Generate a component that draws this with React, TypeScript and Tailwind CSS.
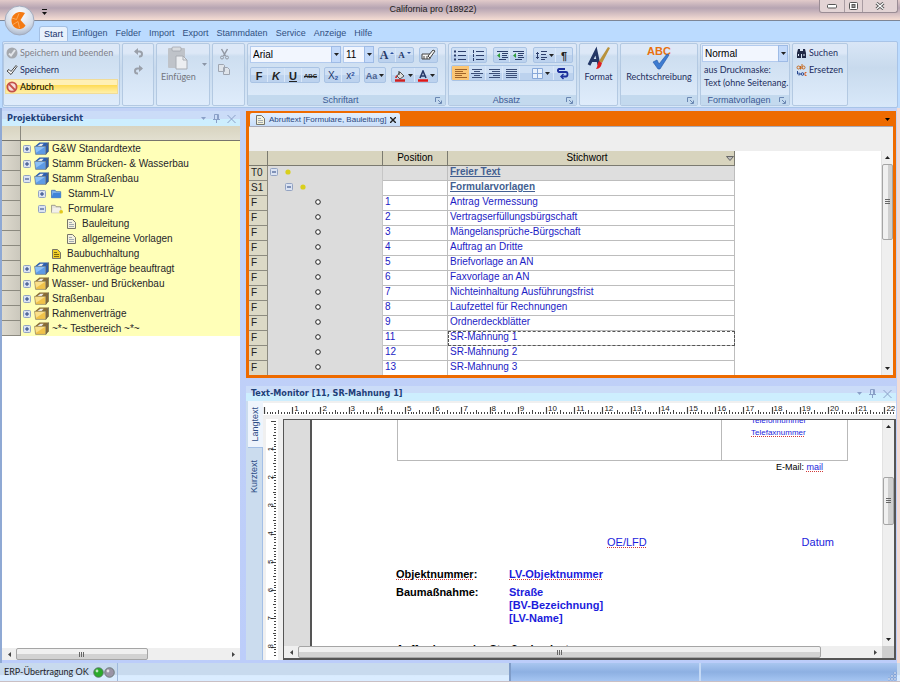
import React from "react";

const ui = "font-['Lato','Open_Sans',sans-serif]";
const sans = "font-['Liberation_Sans',sans-serif]";

/* ---------- small shared pieces ---------- */

function Down({ className = "" }: { className?: string }) {
  return (
    <svg width="5" height="3" viewBox="0 0 5 3" className={className} aria-hidden>
      <path d="M0 0h5L2.500 3z" fill="currentColor" />
    </svg>
  );
}

function Combo({ label, value, width }: { label: string; value: string; width: string }) {
  return (
    <label className={`relative block h-[17px] ${width}`}>
      <select
        aria-label={label}
        defaultValue={value}
        className="h-full w-full appearance-none border border-[#b3cbee] bg-[#f2f6fe] pl-[2px] font-['Liberation_Sans',sans-serif] text-[10px] leading-[14px] text-black outline-none"
      >
        <option>{value}</option>
      </select>
      <span className="pointer-events-none absolute inset-y-0 right-0 flex w-[10px] items-center justify-center border border-[#9ebbe6] bg-[#c4dafa]">
        <Down className="text-[#222]" />
      </span>
    </label>
  );
}

function Group({
  title,
  className = "",
  launcher = false,
  children,
}: {
  title?: string;
  className?: string;
  launcher?: boolean;
  children?: React.ReactNode;
}) {
  return (
    <section
      className={`flex shrink-0 flex-col overflow-hidden rounded-[2px] border border-[#b3c9e2] bg-linear-to-b from-[#dde8f7] from-15% via-[#cddef0] via-20% to-[#dfecfb] ${className}`}
    >
      <div className="min-h-0 flex-1">{children}</div>
      {launcher && (
        <div className={`relative h-[10px] bg-[#c3d9ee] pr-[12px] text-center text-[9px] leading-[10px] text-[#3b5a94] ${sans}`}>
          {title}
          <button aria-label="Optionen" className="absolute top-[2px] right-[3px]">
            <svg width="7" height="7" viewBox="0 0 7 7" fill="none" stroke="#6a87b2" className="block">
              <path d="M.5 5V.5H5M3 3l3 3M6.500 3.500v3h-3" />
            </svg>
          </button>
        </div>
      )}
    </section>
  );
}

function Tool({ label, className = "w-[17px]", children }: { label: string; className?: string; children: React.ReactNode }) {
  return (
    <button
      aria-label={label}
      className={`flex h-[15px] items-center justify-center gap-[2px] border-r border-[#d9e7f8] text-[#222] last:border-r-0 ${className}`}
    >
      {children}
    </button>
  );
}

function Bar({ children }: { children: React.ReactNode }) {
  return (
    <div className="flex h-[16px] overflow-hidden rounded-[2px] border border-[#a9c3e4] bg-linear-to-b from-[#cfe0f5] from-50% to-[#bcd2ee] to-50%">
      {children}
    </div>
  );
}

function Lines({ rows, color = "#3c4f78" }: { rows: [number, number][]; color?: string }) {
  return (
    <svg width="12" height="11" viewBox="0 0 12 11" stroke={color} aria-hidden>
      {rows.map(([a, b], i) => (
        <path key={i} d={`M${a} ${i * 2 + 1.5}H${b}`} />
      ))}
    </svg>
  );
}

/* ---------- title bar ---------- */

function TitleBar() {
  return (
    <header className="relative flex h-[20px] shrink-0 justify-center bg-linear-to-b from-[#e2cbca] via-[#b6a4b2] via-40% to-[#f6ddd3] pr-[34px]">
      <h1 className="text-[9px] leading-[19px] text-[#1c1c1c]">California pro (18922)</h1>
      <svg width="5" height="6" viewBox="0 0 5 6" className="absolute top-[9px] left-[42px]">
        <path d="M0 .5h5" stroke="#111" />
        <path d="M0 3h5L2.500 6z" fill="#111" />
      </svg>
      <div className="absolute top-0 right-[2px] flex h-[13px] rounded-b-[3px] border border-t-0 border-[#9b8d95] bg-[#e3d4d5]">
        <button aria-label="Minimieren" className="flex w-[25px] items-center justify-center border-r border-[#a99ca2]">
          <svg width="11" height="5" viewBox="0 0 11 5"><rect x=".5" y=".5" width="9" height="3.500" rx="1" fill="#fff" stroke="#555" /></svg>
        </button>
        <button aria-label="Wiederherstellen" className="flex w-[18px] items-center justify-center border-r border-[#a99ca2]">
          <svg width="10" height="8" viewBox="0 0 10 8" fill="#fff" stroke="#555"><rect x=".5" y=".5" width="8" height="7" rx="1" /><rect x="3" y="2.500" width="3" height="3" fill="#999" /></svg>
        </button>
        <button aria-label="Schließen" className="flex w-[34px] items-center justify-center">
          <svg width="10" height="8" viewBox="0 0 10 8"><path d="M1.500 1l7 6M8.500 1l-7 6" stroke="#555" strokeWidth="3" /><path d="M1.500 1l7 6M8.500 1l-7 6" stroke="#fff" strokeWidth="1.200" /></svg>
        </button>
      </div>
      <button aria-label="California Menü" className="absolute top-[5px] left-[4px] z-10">
        <svg width="31" height="31" viewBox="0 0 31 31" className="block">
          <defs>
            <radialGradient id="orb" cx=".5" cy=".3" r=".7">
              <stop offset="0" stopColor="#fff" />
              <stop offset=".7" stopColor="#d5dde9" />
              <stop offset="1" stopColor="#a9b6ca" />
            </radialGradient>
          </defs>
          <circle cx="15.500" cy="15.500" r="14.500" fill="url(#orb)" stroke="#a3abbd" />
          <path d="M21 8C15.500 5.500 8.500 8 7.500 14.500 7 21.500 13 25.500 18 23.500c2-.7 3-2 3.500-3l-5-5.500z" fill="#f47a12" />
          <path d="M8 13l4.500 1.500L15 8.500M9 19.500l5-3 1.500 6.500" stroke="#fcb56c" strokeWidth=".8" fill="none" />
        </svg>
      </button>
    </header>
  );
}

/* ---------- ribbon ---------- */

const ribbonTabs = ["Start", "Einfügen", "Felder", "Import", "Export", "Stammdaten", "Service", "Anzeige", "Hilfe"];

function Ribbon() {
  return (
    <div className="shrink-0 border-t border-[#7d8696] bg-[#bbdbff] px-[2px]">
      <nav className="flex h-[20px] items-end pl-[37px] text-[9px] text-[#31507f]">
        {ribbonTabs.map((t, i) => (
          <button
            key={t}
            className={
              i === 0
                ? "h-[15px] rounded-t-[3px] border border-b-0 border-[#a4c0e4] bg-[#e8f1fc] px-[4px] leading-[15px] text-[#15306b]"
                : "h-[15px] px-[4px] leading-[15px]"
            }
          >
            {t}
          </button>
        ))}
      </nav>
      <div className={`flex h-[67px] gap-[2px] rounded-[2px] border border-[#a8c4e8] bg-linear-to-b from-[#d9e6f6] via-[#c8daed] via-40% to-[#d8e8f9] py-px text-[9px] text-[#1e2e60] ${ui}`}>
        <Group className="w-[117px]">
          <div className="flex flex-col gap-[2px] p-px text-[9px] leading-[13px]">
            <button className="flex h-[15px] items-center gap-[2px] px-px text-[#7d8088]">
              <svg width="12" height="12" viewBox="0 0 12 12"><circle cx="6" cy="6" r="5.500" fill="#a4a8ae" /><path d="M3 6.500l2 2L9 3" stroke="#e2e5e9" strokeWidth="2" fill="none" /></svg>
              Speichern und beenden
            </button>
            <button className="flex h-[15px] items-center gap-[2px] px-px">
              <svg width="12" height="12" viewBox="0 0 12 12"><path d="M1 7l2-1.500L5 7.500 10 1.500l1 1L5 10.500z" fill="#fff" stroke="#333" strokeWidth=".9" /></svg>
              Speichern
            </button>
            <button className="flex h-[15px] items-center gap-[2px] border border-[#f1dc98] bg-linear-to-b from-[#fff0b5] from-35% via-[#ffdb52] via-40% to-[#fff0a8] text-black">
              <svg width="12" height="12" viewBox="0 0 12 12" fill="none" stroke="#c4504a" strokeWidth="1.800"><circle cx="6" cy="6" r="4.600" fill="#f7dcd8" /><path d="M3 3l6 6" /></svg>
              Abbruch
            </button>
          </div>
        </Group>
        <Group className="w-[32px]">
          <div className="flex flex-col items-center gap-[7px] pt-[4px]">
            <button aria-label="Rückgängig">
              <svg width="9" height="10" viewBox="0 0 9 10" className="block"><path d="M1.500 3.500h4a2.300 2.300 0 010 5H5" stroke="#9aa0aa" strokeWidth="2" fill="none" /><path d="M0 3.500L4 0v7z" fill="#9aa0aa" /></svg>
            </button>
            <button aria-label="Wiederholen">
              <svg width="9" height="10" viewBox="0 0 9 10" className="block"><path d="M7.500 3.500h-4a2.300 2.300 0 000 5H4" stroke="#9aa0aa" strokeWidth="2" fill="none" /><path d="M9 3.500L5 0v7z" fill="#9aa0aa" /></svg>
            </button>
          </div>
        </Group>
        <Group className="w-[54px]">
          <div className="flex justify-between pr-[2px] pl-[4px]">
            <button className="flex flex-col items-center text-[9px] leading-[11px] text-[#73757d]">
              <svg width="22" height="25" viewBox="0 0 22 25" className="mt-[2px]">
                <rect x="1" y="2" width="17" height="20" rx="1" fill="#bfc3c9" />
                <rect x="5" y="1" width="9" height="4" rx="1" fill="#d9dce0" stroke="#9b9fa6" strokeWidth=".7" />
                <path d="M9 10h7l4 4v9H9z" fill="#eceef1" stroke="#a8acb3" /><path d="M16 10v4h4" fill="none" stroke="#a8acb3" />
              </svg>
              Einfügen
            </button>
            <Down className="mt-[19px] text-[#8b95a6]" />
          </div>
        </Group>
        <Group className="w-[33px]">
          <div className="flex flex-col items-center gap-[4px] pt-[4px] pr-[9px]">
            <button aria-label="Ausschneiden">
              <svg width="9" height="12" viewBox="0 0 9 12" stroke="#9298a3" fill="none" className="block"><path d="M1.500 1l4 7M7.500 1l-4 7" strokeWidth="1.500" /><circle cx="2" cy="9.500" r="1.500" /><circle cx="7" cy="9.500" r="1.500" /></svg>
            </button>
            <button aria-label="Kopieren">
              <svg width="12" height="11" viewBox="0 0 12 11" stroke="#9ea5b0" fill="#dfe4ea" className="block"><path d="M.5.5h5l1 1v6h-6zM5.500 3.500h4l2 2v5h-6z" /></svg>
            </button>
          </div>
        </Group>

        <Group title="Schriftart" launcher className={`w-[199px] ${sans}`}>
          <div className="flex flex-col gap-[4px] px-[2px] pt-[2px]">
            <div className="flex items-center">
              <Combo label="Schriftart" value="Arial" width="w-[91px]" />
              <span className="w-[2px]" />
              <Combo label="Schriftgröße" value="11" width="w-[31px]" />
              <span className="w-[4px]" />
              <Bar>
                <Tool label="Schrift vergrößern"><span className="font-['Liberation_Serif',serif] text-[12px] leading-[12px] font-bold text-[#273a6a]">A</span><svg width="4" height="8" viewBox="0 0 4 8"><path d="M0 3l2-2 2 2z" fill="#2a4fa0" /></svg></Tool>
                <Tool label="Schrift verkleinern"><span className="font-['Liberation_Serif',serif] text-[9px] leading-[12px] font-bold text-[#273a6a]">A</span><svg width="4" height="8" viewBox="0 0 4 8"><path d="M0 1h4L2 3z" fill="#2a4fa0" /></svg></Tool>
              </Bar>
              <span className="w-[5px]" />
              <Bar>
                <Tool label="Formatierung löschen">
                  <svg width="15" height="12" viewBox="0 0 15 12" fill="#f4f4f4" stroke="#444"><path d="M1 5h8v5H1zM3 10V7M6 10V7" /><path d="M7 7l5-6 2 1-5 7z" /></svg>
                </Tool>
              </Bar>
            </div>
            <div className="flex items-center leading-[12px]">
              <Bar>
                <Tool label="Fett"><b className="text-[11px]">F</b></Tool>
                <Tool label="Kursiv"><b className="text-[11px] italic">K</b></Tool>
                <Tool label="Unterstrichen"><b className="text-[11px] underline">U</b></Tool>
                <Tool label="Durchgestrichen"><b className="text-[6px] line-through">ABC</b></Tool>
              </Bar>
              <span className="w-[4px]" />
              <Bar>
                <Tool label="Tiefgestellt"><span className="text-[10px] text-[#24376b]">X<sub className="text-[6px] font-bold text-[#2a4fa0]">2</sub></span></Tool>
                <Tool label="Hochgestellt"><span className="text-[10px] text-[#24376b]">x<sup className="text-[6px] font-bold text-[#2a4fa0]">2</sup></span></Tool>
              </Bar>
              <span className="w-[4px]" />
              <Bar>
                <Tool label="Groß-/Kleinschreibung" className="w-[20px]"><span className="text-[9px] font-bold text-[#4a628f]">Aa</span><Down /></Tool>
              </Bar>
              <span className="w-[5px]" />
              <Bar>
                <Tool label="Hervorheben" className="w-[23px]">
                  <svg width="12" height="12" viewBox="0 0 12 12"><path d="M3 6l3-4 4 4-4 3z" fill="#ddd" stroke="#555" /><path d="M5 1v4" stroke="#333" /><path d="M1 8c0-2 2-3 2-3v3z" fill="#c33" /><path d="M1 10.500h10" stroke="#d02020" strokeWidth="2.500" /></svg>
                  <Down />
                </Tool>
                <Tool label="Schriftfarbe" className="w-[22px]">
                  <svg width="10" height="12" viewBox="0 0 10 12"><path d="M2 8l3-7 3 7M3 6h4" stroke="#273a6a" strokeWidth="1.600" fill="none" /><path d="M0 10.500h10" stroke="#e01818" strokeWidth="2.500" /></svg>
                  <Down />
                </Tool>
              </Bar>
            </div>
          </div>
        </Group>

        <Group title="Absatz" launcher className={`w-[129px] ${sans}`}>
          <div className="flex flex-col gap-[2px] px-[2px] pt-[3px]">
            <div className="flex gap-[6px]">
              <Bar>
                <Tool label="Aufzählung"><svg width="12" height="11" viewBox="0 0 12 11" stroke="#2d3f6c"><path d="M0 1.500h2M0 5.500h2M0 9.500h2" strokeWidth="2" /><path d="M4 1.500h8M4 5.500h8M4 9.500h8" /></svg></Tool>
                <Tool label="Nummerierung"><svg width="12" height="11" viewBox="0 0 12 11" stroke="#2d3f6c"><path d="M1.500 0v3M1.500 4v3M1.500 8v3" /><path d="M4 1.500h8M4 5.500h8M4 9.500h8" /></svg></Tool>
              </Bar>
              <Bar>
                {["Einzug verkleinern", "Einzug vergrößern"].map((l) => (
                  <Tool key={l} label={l} className="w-[16px]">
                    <svg width="12" height="11" viewBox="0 0 12 11" stroke="#2d3f6c"><path d="M1 1.500h11M6 3.500h6M6 5.500h5M6 7.500h6M3 9.500h7" /><path d="M4 3L1 5.500 4 8z" fill="#2f9c3c" stroke="none" /></svg>
                  </Tool>
                ))}
              </Bar>
              <Bar>
                <Tool label="Zeilenabstand" className="w-[22px]">
                  <svg width="11" height="11" viewBox="0 0 11 11" stroke="#2d3f6c"><path d="M5 1.500h6M5 4.500h5M5 7.500h6M5 9.500h4M1.500 2v7M0 3.500h3M0 7.500h3" /></svg>
                  <Down />
                </Tool>
                <Tool label="Formatierungszeichen" className="w-[16px]"><b className="text-[11px] leading-[12px]">¶</b></Tool>
              </Bar>
            </div>
            <Bar>
              <button aria-label="Linksbündig" aria-pressed="true" className="flex w-[17px] items-center justify-center bg-[#fbc674]"><Lines rows={[[0, 12], [0, 8], [0, 11], [0, 7], [0, 12]]} color="#a0642a" /></button>
              <Tool label="Zentriert"><Lines rows={[[1, 11], [3, 9], [0, 12], [3, 9], [1, 11]]} /></Tool>
              <Tool label="Rechtsbündig"><Lines rows={[[1, 12], [4, 12], [1, 12], [5, 12], [1, 12]]} /></Tool>
              <Tool label="Blocksatz"><Lines rows={[[1, 12], [1, 12], [1, 12], [1, 12], [1, 12]]} /></Tool>
              <Tool label="Rahmen" className="w-[34px] pl-[8px]">
                <svg width="11" height="11" viewBox="0 0 11 11" fill="#e9f2fc" stroke="#88a8d8"><path d="M.5.5h10v10H.5zM5.500.5v10M.5 5.500h10" /></svg>
                <Down />
              </Tool>
              <Tool label="Textfluss"><svg width="13" height="13" viewBox="0 0 13 13" fill="none" stroke="#1c2f9c" strokeWidth="1.800"><path d="M9 2H3c-1.500 0-1.500 3 0 3h7c2 0 2 4.500 0 4.500H6" /><path d="M7.500 7L5 9.500 7.500 12" strokeWidth="1.400" /></svg></Tool>
            </Bar>
          </div>
        </Group>

        <Group className="w-[39px]">
          <button className="flex w-full flex-col items-center text-[9px] leading-[11px]">
            <svg width="24" height="25" viewBox="0 0 24 25" className="mt-[2px]">
              <path d="M2 19L9 5l3 14M5 14.500h7" stroke="#233766" strokeWidth="3" fill="none" />
              <path d="M21 1l2 1-8 15-3-2z" fill="#b8923c" /><path d="M12 15l3 2-1 3c-1 2-3 3-5 3 2-3 1-5 3-8z" fill="#e01f1f" />
            </svg>
            Format
          </button>
        </Group>
        <Group launcher className="w-[78px]">
          <button className="flex w-full flex-col items-center text-[9px] leading-[11px]">
            <span className="relative mt-[3px] block h-[24px] w-[26px]">
              <b className="block font-['Liberation_Sans',sans-serif] text-[11px] leading-[9px] text-[#e8710f]">ABC</b>
              <svg width="18" height="17" viewBox="0 0 18 17" className="absolute top-[6px] left-[6px]"><path d="M1 9l4-2 2 4L15 1l2 1L8 16H6z" fill="#3d7bd1" stroke="#2558a5" strokeWidth=".6" /></svg>
            </span>
            Rechtschreibung
          </button>
        </Group>
        <Group title="Formatvorlagen" launcher className="w-[90px]">
          <div className="px-px pt-px text-[9px] leading-[13px] whitespace-nowrap">
            <Combo label="Formatvorlage" value="Normal" width="w-[86px]" />
            <p className="mt-px pl-[2px]">aus Druckmaske:</p>
            <p className="pl-[2px]">Text (ohne Seitenang.</p>
          </div>
        </Group>
        <Group className="w-[56px]">
          <div className="flex flex-col gap-[3px] pt-[2px] pl-[3px] text-[9px]">
            <button className="flex h-[14px] items-center gap-[2px]">
              <svg width="11" height="11" viewBox="0 0 11 11" fill="#202945"><path d="M1 5l1-4h2v2h3V1h2l1 4v5H6V6H5v4H1z" /><path d="M2 6h1v2H2zM7.500 6h1v2h-1z" fill="#dce8f8" /></svg>
              Suchen
            </button>
            <button className="flex h-[14px] items-center gap-[2px]">
              <svg width="11" height="13" viewBox="0 0 11 13" fill="none">
                <circle cx="2.500" cy="3.500" r="1.500" stroke="#c66a20" /><path d="M4.500 2v3.500M6 0v5" stroke="#c66a20" /><circle cx="7.500" cy="3.500" r="1.500" stroke="#c66a20" />
                <path d="M1.500 7v3H4M3 8.500L4.500 10 3 11.500" stroke="#27468f" /><circle cx="6.500" cy="10" r="1.300" stroke="#27468f" /><path d="M10.500 8.500H9v3h1.500" stroke="#d9642a" />
              </svg>
              Ersetzen
            </button>
          </div>
        </Group>
      </div>
    </div>
  );
}

/* ---------- dock panel caption ---------- */

function Caption({ children }: { children: React.ReactNode }) {
  return (
    <div className="flex h-[15px] shrink-0 items-center justify-between bg-linear-to-b from-[#cbdcf8] from-50% to-[#cdeefe] to-50% pr-[4px] pl-[5px]">
      <h2 className="font-['DejaVu_Sans_Condensed','DejaVu_Sans',sans-serif] text-[9px] font-bold text-[#1e4078]">{children}</h2>
      <div className="flex items-center gap-[7px] text-[#8aa0c8]">
        <button aria-label="Menü"><Down /></button>
        <button aria-label="Anheften"><svg width="7" height="9" viewBox="0 0 7 9" stroke="currentColor" fill="none" className="block"><path d="M1.500 5V.5h4V5M0 5.500h7M3.500 6v3M4.500 1v4" /></svg></button>
        <button aria-label="Schließen"><svg width="9" height="8" viewBox="0 0 9 8" stroke="currentColor" className="block"><path d="M.5 0l8 8M8.500 0l-8 8" /></svg></button>
      </div>
    </div>
  );
}

/* ---------- project tree ---------- */

type Kind = "blueBox" | "goldBox" | "blueFolder" | "folder" | "doc" | "goldDoc";

function NodeIcon({ kind }: { kind: Kind }) {
  if (kind === "blueBox" || kind === "goldBox") {
    const [a, b, c] = kind === "blueBox" ? ["#5d9be6", "#2b5fb2", "#8cc0f6"] : ["#f0c24a", "#8a6d35", "#fbe08a"];
    return (
      <svg width="15" height="13" viewBox="0 0 14 12" className="shrink-0">
        <path d="M1 4l4-3.500h8.500L11 4z" fill={b} />
        <path d="M3 4l3-2.500h3l-2 2.500z" fill="#eee" />
        <path d="M11 4l2.500-3.500v8L11 11.500z" fill={b} stroke="#4a4a4a" strokeWidth=".5" />
        <path d="M.5 4H11v7.500H1.500z" fill={a} stroke="#6b6b6b" strokeWidth=".5" />
        <path d="M1 4.500h9L2 10z" fill={c} />
      </svg>
    );
  }
  if (kind === "blueFolder" || kind === "folder") {
    const blue = kind === "blueFolder";
    return (
      <svg width="12" height="10" viewBox="0 0 13 10" className="shrink-0">
        <path d="M.5 1h4l1 1.500h5V9H.5z" fill={blue ? "#7db0ea" : "#e6e4da"} stroke={blue ? "#3668ac" : "#85837c"} strokeWidth=".8" />
        <path d="M2.500 4h8v5h-10z" fill={blue ? "#3f84d8" : "#f3f1ea"} />
        {!blue && <circle cx="11" cy="8" r="2" fill="#e2c91d" />}
      </svg>
    );
  }
  return (
    <svg width="9" height="10" viewBox="0 0 9 10" className="shrink-0">
      <path d="M.5.5h5l3 3v6h-8z" fill={kind === "doc" ? "#f4f2dc" : "#f0cf28"} stroke="#77756a" />
      <path d="M2 3.500h3M2 5.500h5M2 7.500h5" stroke={kind === "doc" ? "#9aa3ae" : "#6f5e10"} strokeWidth=".9" />
    </svg>
  );
}

function Toggle({ open }: { open: boolean }) {
  return (
    <button aria-label={open ? "Zuklappen" : "Aufklappen"} className="shrink-0">
      <svg width="8" height="8" viewBox="0 0 8 8" className="block">
        <rect x=".5" y=".5" width="7" height="7" rx="1" fill="#dbe3f2" stroke="#93a3c2" />
        <path d={open ? "M2 4h4" : "M2 4h4M4 2v4"} stroke="#24407e" />
      </svg>
    </button>
  );
}

const tree: { text: string; kind: Kind; pad: string; open?: boolean }[] = [
  { text: "G&W Standardtexte", kind: "blueBox", pad: "gap-[3px] pl-[2px]", open: false },
  { text: "Stamm Brücken- & Wasserbau", kind: "blueBox", pad: "gap-[3px] pl-[2px]", open: false },
  { text: "Stamm Straßenbau", kind: "blueBox", pad: "gap-[3px] pl-[2px]", open: true },
  { text: "Stamm-LV", kind: "blueFolder", pad: "gap-[5px] pl-[17px]", open: false },
  { text: "Formulare", kind: "folder", pad: "gap-[5px] pl-[17px]", open: true },
  { text: "Bauleitung", kind: "doc", pad: "gap-[6px] pl-[46px]" },
  { text: "allgemeine Vorlagen", kind: "doc", pad: "gap-[6px] pl-[46px]" },
  { text: "Baubuchhaltung", kind: "goldDoc", pad: "gap-[6px] pl-[31px]" },
  { text: "Rahmenverträge beauftragt", kind: "blueBox", pad: "gap-[3px] pl-[2px]", open: false },
  { text: "Wasser- und Brückenbau", kind: "goldBox", pad: "gap-[3px] pl-[2px]", open: false },
  { text: "Straßenbau", kind: "goldBox", pad: "gap-[3px] pl-[2px]", open: false },
  { text: "Rahmenverträge", kind: "goldBox", pad: "gap-[3px] pl-[2px]", open: false },
  { text: "~*~ Testbereich ~*~", kind: "goldBox", pad: "gap-[3px] pl-[2px]", open: false },
];

function HScroll({ thumb }: { thumb: string }) {
  return (
    <div className="flex h-[12px] min-w-0 flex-1 items-stretch bg-[#efefef]">
      <button aria-label="Nach links" className="flex w-[14px] items-center justify-center"><svg width="3" height="5" viewBox="0 0 3 5"><path d="M3 0v5L0 2.500z" fill="#444" /></svg></button>
      <div className={`flex items-center justify-center rounded-[2px] border border-[#a5a5a5] bg-linear-to-b from-[#f0f0f0] from-50% to-[#d2d2d2] to-50% ${thumb}`}>
        <svg width="6" height="5" viewBox="0 0 6 5" stroke="#666"><path d="M.5 0v5M2.500 0v5M4.500 0v5" /></svg>
      </div>
      <div className="flex-1" />
      <button aria-label="Nach rechts" className="flex w-[14px] items-center justify-center"><svg width="3" height="5" viewBox="0 0 3 5"><path d="M0 0v5l3-2.500z" fill="#444" /></svg></button>
    </div>
  );
}

function VScroll({ lead, thumb }: { lead: string; thumb: string }) {
  return (
    <div className="flex w-[12px] shrink-0 flex-col border-l border-[#e2e2e2] bg-[#efefef]">
      <button aria-label="Nach oben" className="flex h-[13px] items-center justify-center"><svg width="5" height="3" viewBox="0 0 5 3"><path d="M0 3h5L2.500 0z" fill="#222" /></svg></button>
      <div className={lead} />
      <div className={`flex items-center justify-center rounded-[2px] border border-[#a5a5a5] bg-linear-to-r from-[#f0f0f0] from-50% to-[#cfcfcf] to-50% ${thumb}`}>
        <svg width="5" height="6" viewBox="0 0 5 6" stroke="#666"><path d="M0 .5h5M0 2.500h5M0 4.500h5" /></svg>
      </div>
      <div className="flex-1" />
      <button aria-label="Nach unten" className="flex h-[13px] items-center justify-center"><Down className="text-[#222]" /></button>
    </div>
  );
}

function ProjectPanel() {
  return (
    <aside className="flex w-[238px] shrink-0 flex-col bg-white">
      <Caption>Projektübersicht</Caption>
      <div className="flex h-[15px] shrink-0 border-b border-[#77756d] bg-linear-to-b from-[#d8d4c0] to-[#e2dfd0]">
        <div className="w-[19px] border-r border-[#8b897f]" />
      </div>
      <ul className="bg-[#ffffb8] text-[10px] text-[#26262a]">
        {tree.map((n) => (
          <li key={n.text} className="flex h-[15px]">
            <span className="w-[19px] shrink-0 border-r border-b border-[#8b897f] bg-linear-to-r from-[#dedace] to-[#cbc8bd]" />
            <span className={`flex items-center ${n.pad}`}>
              {n.open !== undefined && <Toggle open={n.open} />}
              <NodeIcon kind={n.kind} />
              <span className="whitespace-nowrap leading-[15px]">{n.text}</span>
            </span>
          </li>
        ))}
      </ul>
      <div className="flex-1" />
      <div className="flex"><HScroll thumb="w-[132px]" /></div>
    </aside>
  );
}

/* ---------- text list ---------- */

const rows = [
  ["T0", "", "Freier Text"],
  ["S1", "", "Formularvorlagen"],
  ["F", "1", "Antrag Vermessung"],
  ["F", "2", "Vertragserfüllungsbürgschaft"],
  ["F", "3", "Mängelansprüche-Bürgschaft"],
  ["F", "4", "Auftrag an Dritte"],
  ["F", "5", "Briefvorlage an AN"],
  ["F", "6", "Faxvorlage an AN"],
  ["F", "7", "Nichteinhaltung Ausführungsfrist"],
  ["F", "8", "Laufzettel für Rechnungen"],
  ["F", "9", "Ordnerdeckblätter"],
  ["F", "11", "SR-Mahnung 1"],
  ["F", "12", "SR-Mahnung 2"],
  ["F", "13", "SR-Mahnung 3"],
];

function ListPanel() {
  return (
    <section className="flex h-[267px] shrink-0 flex-col border-[3px] border-t-[2px] border-[#ee6b00] bg-[#ee6b00]">
      <div className="flex h-[13px] shrink-0 items-stretch justify-between pr-[3px] pl-px">
        <div className="flex items-center gap-[4px] rounded-t-[2px] bg-linear-to-b from-[#e4effc] to-[#c8defa] pr-[4px] pl-[6px]">
          <NodeIcon kind="doc" />
          <span className="text-[8px] leading-[13px] text-[#29467d]">Abruftext [Formulare, Bauleitung]</span>
          <button aria-label="Reiter schließen"><svg width="6" height="6" viewBox="0 0 6 6" stroke="#222" strokeWidth="1.400" className="block"><path d="M0 0l6 6M6 0L0 6" /></svg></button>
        </div>
        <button aria-label="Fensterliste"><Down className="text-black" /></button>
      </div>
      <div className="h-[25px] shrink-0 border-t border-[#a9a9b5] bg-[#eeeeee]" />
      <div className="flex min-h-0 flex-1 overflow-hidden bg-white">
        <div className="min-w-0 flex-1 overflow-hidden">
          <table className="w-[486px] table-fixed border-separate border-spacing-0 text-[10px] leading-[12px]">
            <colgroup><col className="w-[19px]" /><col className="w-[115px]" /><col className="w-[65px]" /><col /></colgroup>
            <thead>
              <tr className="h-[15px] bg-[#d8d4be] text-black">
                {["", "", "Position", "Stichwort"].map((h, i) => (
                  <th key={i} scope="col" className="border-r border-b border-[#7b7a70] p-0 font-normal">
                    {i === 3 ? (
                      <span className="flex items-center"><span className="flex-1">{h}</span><svg width="8" height="5" viewBox="0 0 8 5" stroke="#666" fill="#bbb"><path d="M.5.5h7L4 4.500z" /></svg></span>
                    ) : h}
                  </th>
                ))}
              </tr>
            </thead>
            <tbody>
              {rows.map(([k, pos, text], i) => (
                <tr key={i} className={`h-[15px] text-[#1c1cc4] ${i === 0 ? "bg-[#dedede]" : ""}`}>
                  <th scope="row" className="border-r border-b border-[#8d8b80] bg-[#dcd9c6] p-0 pl-[2px] text-left font-normal text-[#222]">{k}</th>
                  <td className="border-r border-[#c6c6c6] bg-[#dcdcdc] p-0 pb-[3px]">
                    <span className={`flex h-[12px] items-center gap-[7px] ${i === 0 ? "pl-[2px]" : i === 1 ? "pl-[17px]" : "pl-[47px]"}`}>
                      {i < 2 ? (
                        <><Toggle open /><svg width="6" height="6" viewBox="0 0 6 6"><circle cx="3" cy="3" r="2.600" fill="#d9cf1c" /></svg></>
                      ) : (
                        <svg width="6" height="6" viewBox="0 0 6 6"><circle cx="3" cy="3" r="2.300" fill="#fff" stroke="#222" /></svg>
                      )}
                    </span>
                  </td>
                  <td className="border-r border-b border-[#bdbdbd] p-0 pb-[2px] pl-[2px]">{pos}</td>
                  <td
                    className={`border-r border-b border-[#bdbdbd] p-0 pb-[2px] pl-[2px] ${i === 11 ? "outline-1 -outline-offset-1 outline-[#555] outline-dashed" : ""} ${i < 2 ? "font-bold text-[#435f91] underline" : ""}`}
                  >
                    {text}
                  </td>
                </tr>
              ))}
            </tbody>
          </table>
        </div>
        <VScroll lead="h-0" thumb="h-[76px]" />
      </div>
    </section>
  );
}

/* ---------- text monitor ---------- */

const STEP = 28.2;

function HRuler() {
  const ticks = Array.from({ length: 232 }, (_, i) => i);
  return (
    <svg height="12" className="block w-full" aria-hidden>
      {ticks.map((i) => {
        const x = Math.round(1 + (i * STEP) / 10) + 0.5;
        const top = i % 10 === 0 ? 4 : i % 5 === 0 ? 7 : 9;
        return <path key={i} d={`M${x} ${top}V11`} stroke="#444" strokeWidth={i % 10 === 0 ? 1.2 : 1} />;
      })}
      {Array.from({ length: 22 }, (_, i) => (
        <text key={i} x={3 + (i + 1) * STEP} y="8" fontSize="8" fill="#222" fontFamily="Liberation Sans">{i + 1}</text>
      ))}
    </svg>
  );
}

function VRuler() {
  const ticks = Array.from({ length: 84 }, (_, i) => i);
  return (
    <svg width="12" className="block h-full" aria-hidden>
      {ticks.map((i) => {
        const y = Math.round(2 + (i * STEP) / 10) + 0.5;
        const left = i % 10 === 0 ? 5 : i % 5 === 0 ? 7 : 8;
        return <path key={i} d={`M${left} ${y}H10`} stroke="#444" />;
      })}
      {Array.from({ length: 8 }, (_, i) => (
        <text key={i} transform={`translate(7 ${4 + (i + 1) * STEP}) rotate(-90)`} fontSize="8" fill="#222" fontFamily="Liberation Sans">{i + 1}</text>
      ))}
    </svg>
  );
}

const squiggle = "underline decoration-[#d23a3a] decoration-dotted decoration-1 underline-offset-1";

function Page() {
  return (
    <article className="min-w-0 flex-1 overflow-hidden border-l-2 border-[#555] bg-white pl-[84px] text-[11px] leading-[13px] text-[#1c1cdc]">
      <div className="ml-px flex h-[41px] w-[451px] border border-t-0 border-[#b9b9b9] text-[8px] leading-[12px]">
        <div className="flex-1 border-r border-[#b9b9b9]" />
        <div className="w-[125px] pl-[29px]">
          <p className="-mt-[5px]">Telefonnummer</p>
          <p className={squiggle}>Telefaxnummer</p>
        </div>
      </div>
      <p className="w-[427px] text-right text-[9px] text-black">
        E-Mail: <span className={`text-[#1c1cdc] ${squiggle}`}>mail</span>
      </p>
      <p className="mt-[62px] flex w-[438px] justify-between pl-[211px]">
        <span className={squiggle}>OE/LFD</span>
        <span>Datum</span>
      </p>
      <dl className="mt-[19px] grid grid-cols-[113px_1fr] font-bold">
        <dt className="text-black"><span className={squiggle}>Objektnummer</span>:</dt>
        <dd className={squiggle}>LV-Objektnummer</dd>
        <dt className="mt-[5px] text-black">Baumaßnahme:</dt>
        <dd className="mt-[5px]">Straße<br />[BV-Bezeichnung]<br />[LV-Name]</dd>
      </dl>
      <p className="mt-[18px] font-bold text-black">Aufforderung der Straßenbaulast</p>
    </article>
  );
}

function MonitorPanel() {
  return (
    <section className="flex min-h-0 flex-1 flex-col">
      <Caption>Text-Monitor [11, SR-Mahnung 1]</Caption>
      <div className="flex min-h-0 flex-1">
        <div className="flex w-[17px] shrink-0 flex-col bg-[#cbdcee] pl-[2px] text-[9px] text-[#2d4c86]">
          <button className="flex h-[46px] w-full items-center justify-center bg-[#eef4fc]"><span className="rotate-180 [writing-mode:vertical-rl]">Langtext</span></button>
          <button className="flex h-[58px] w-full items-center justify-center border-t border-r border-[#a3bfe6]"><span className="rotate-180 [writing-mode:vertical-rl]">Kurztext</span></button>
          <div className="w-full flex-1 border-r border-[#a3bfe6]" />
        </div>
        <div className="flex min-w-0 flex-1 flex-col bg-[#f0f0f0]">
          <div className="h-[18px] shrink-0 overflow-hidden bg-[#f0f0f0] pt-[2px]"><div className="bg-white"><HRuler /></div></div>
          <div className="flex min-h-0 flex-1">
            <div className="w-[20px] shrink-0 overflow-hidden pl-[3px]"><div className="h-full w-[12px] bg-white"><VRuler /></div></div>
            <div className="flex min-w-0 flex-1 flex-col border-2 border-t border-l border-[#555]">
              <div className="flex min-h-0 flex-1">
                <div className="w-[26px] shrink-0 bg-[#dcdcdc]" />
                <Page />
                <VScroll lead="h-[44px]" thumb="h-[48px]" />
              </div>
              <div className="flex shrink-0">
                <HScroll thumb="w-[523px]" />
                <div className="w-[12px] bg-[#cfcfcf]" />
              </div>
            </div>
          </div>
        </div>
      </div>
    </section>
  );
}

/* ---------- status bar ---------- */

function Lamp({ color }: { color: string }) {
  return (
    <svg width="11" height="11" viewBox="0 0 11 11"><circle cx="5.500" cy="5.500" r="4.800" fill={color} stroke="#5f6f6a" strokeWidth=".8" /><circle cx="4" cy="4" r="1.400" fill="#fff" opacity=".7" /></svg>
  );
}

function StatusBar() {
  return (
    <footer className="flex h-[19px] shrink-0 border-b border-[#c9bfc4] bg-linear-to-b from-[#c8daee] from-65% to-[#daecff] to-70% pr-[3px] pl-[2px]">
      <div className={`flex w-[116px] items-center gap-[4px] border-r border-[#9fb9dc] pl-[2px] text-[9px] text-[#1f1f2a] ${ui}`}>
        ERP-Übertragung OK
        <span className="flex"><Lamp color="#2bab2b" /><Lamp color="#9a94a6" /></span>
      </div>
      <div className="flex-1" />
      <div className="flex w-[388px] border-l-2 border-[#7f9cc8] bg-linear-to-b from-[#a9c6f0] via-[#8db0e2] via-50% to-[#a5c5f2]">
        <div className="w-[190px] border-r-2 border-[#c4d9f5]" />
        <div className="flex flex-1 items-end justify-end">
          <svg width="9" height="9" viewBox="0 0 9 9" fill="#e9f2ff" stroke="#5f7fb5" strokeWidth=".4"><path d="M6 0h2v2H6zM3 3h2v2H3zM6 3h2v2H6zM0 6h2v2H0zM3 6h2v2H3zM6 6h2v2H6z" /></svg>
        </div>
      </div>
    </footer>
  );
}

export default function App() {
  return (
    <div className={`flex h-screen min-h-[600px] flex-col overflow-hidden bg-[#bbccf6] ${sans}`}>
      <TitleBar />
      <Ribbon />
      <main className="flex min-h-0 flex-1 gap-[6px] border-r-[3px] border-l-2 border-r-[#f3dcd5] border-l-[#8fa9d4] bg-linear-to-b from-[#c2d2f6] to-[#bccdfa] pt-[3px] pr-px pb-[3px]">
        <div className="flex"><ProjectPanel /></div>
        <div className="flex min-w-0 flex-1 flex-col gap-[8px]">
          <ListPanel />
          <MonitorPanel />
        </div>
      </main>
      <StatusBar />
    </div>
  );
}
